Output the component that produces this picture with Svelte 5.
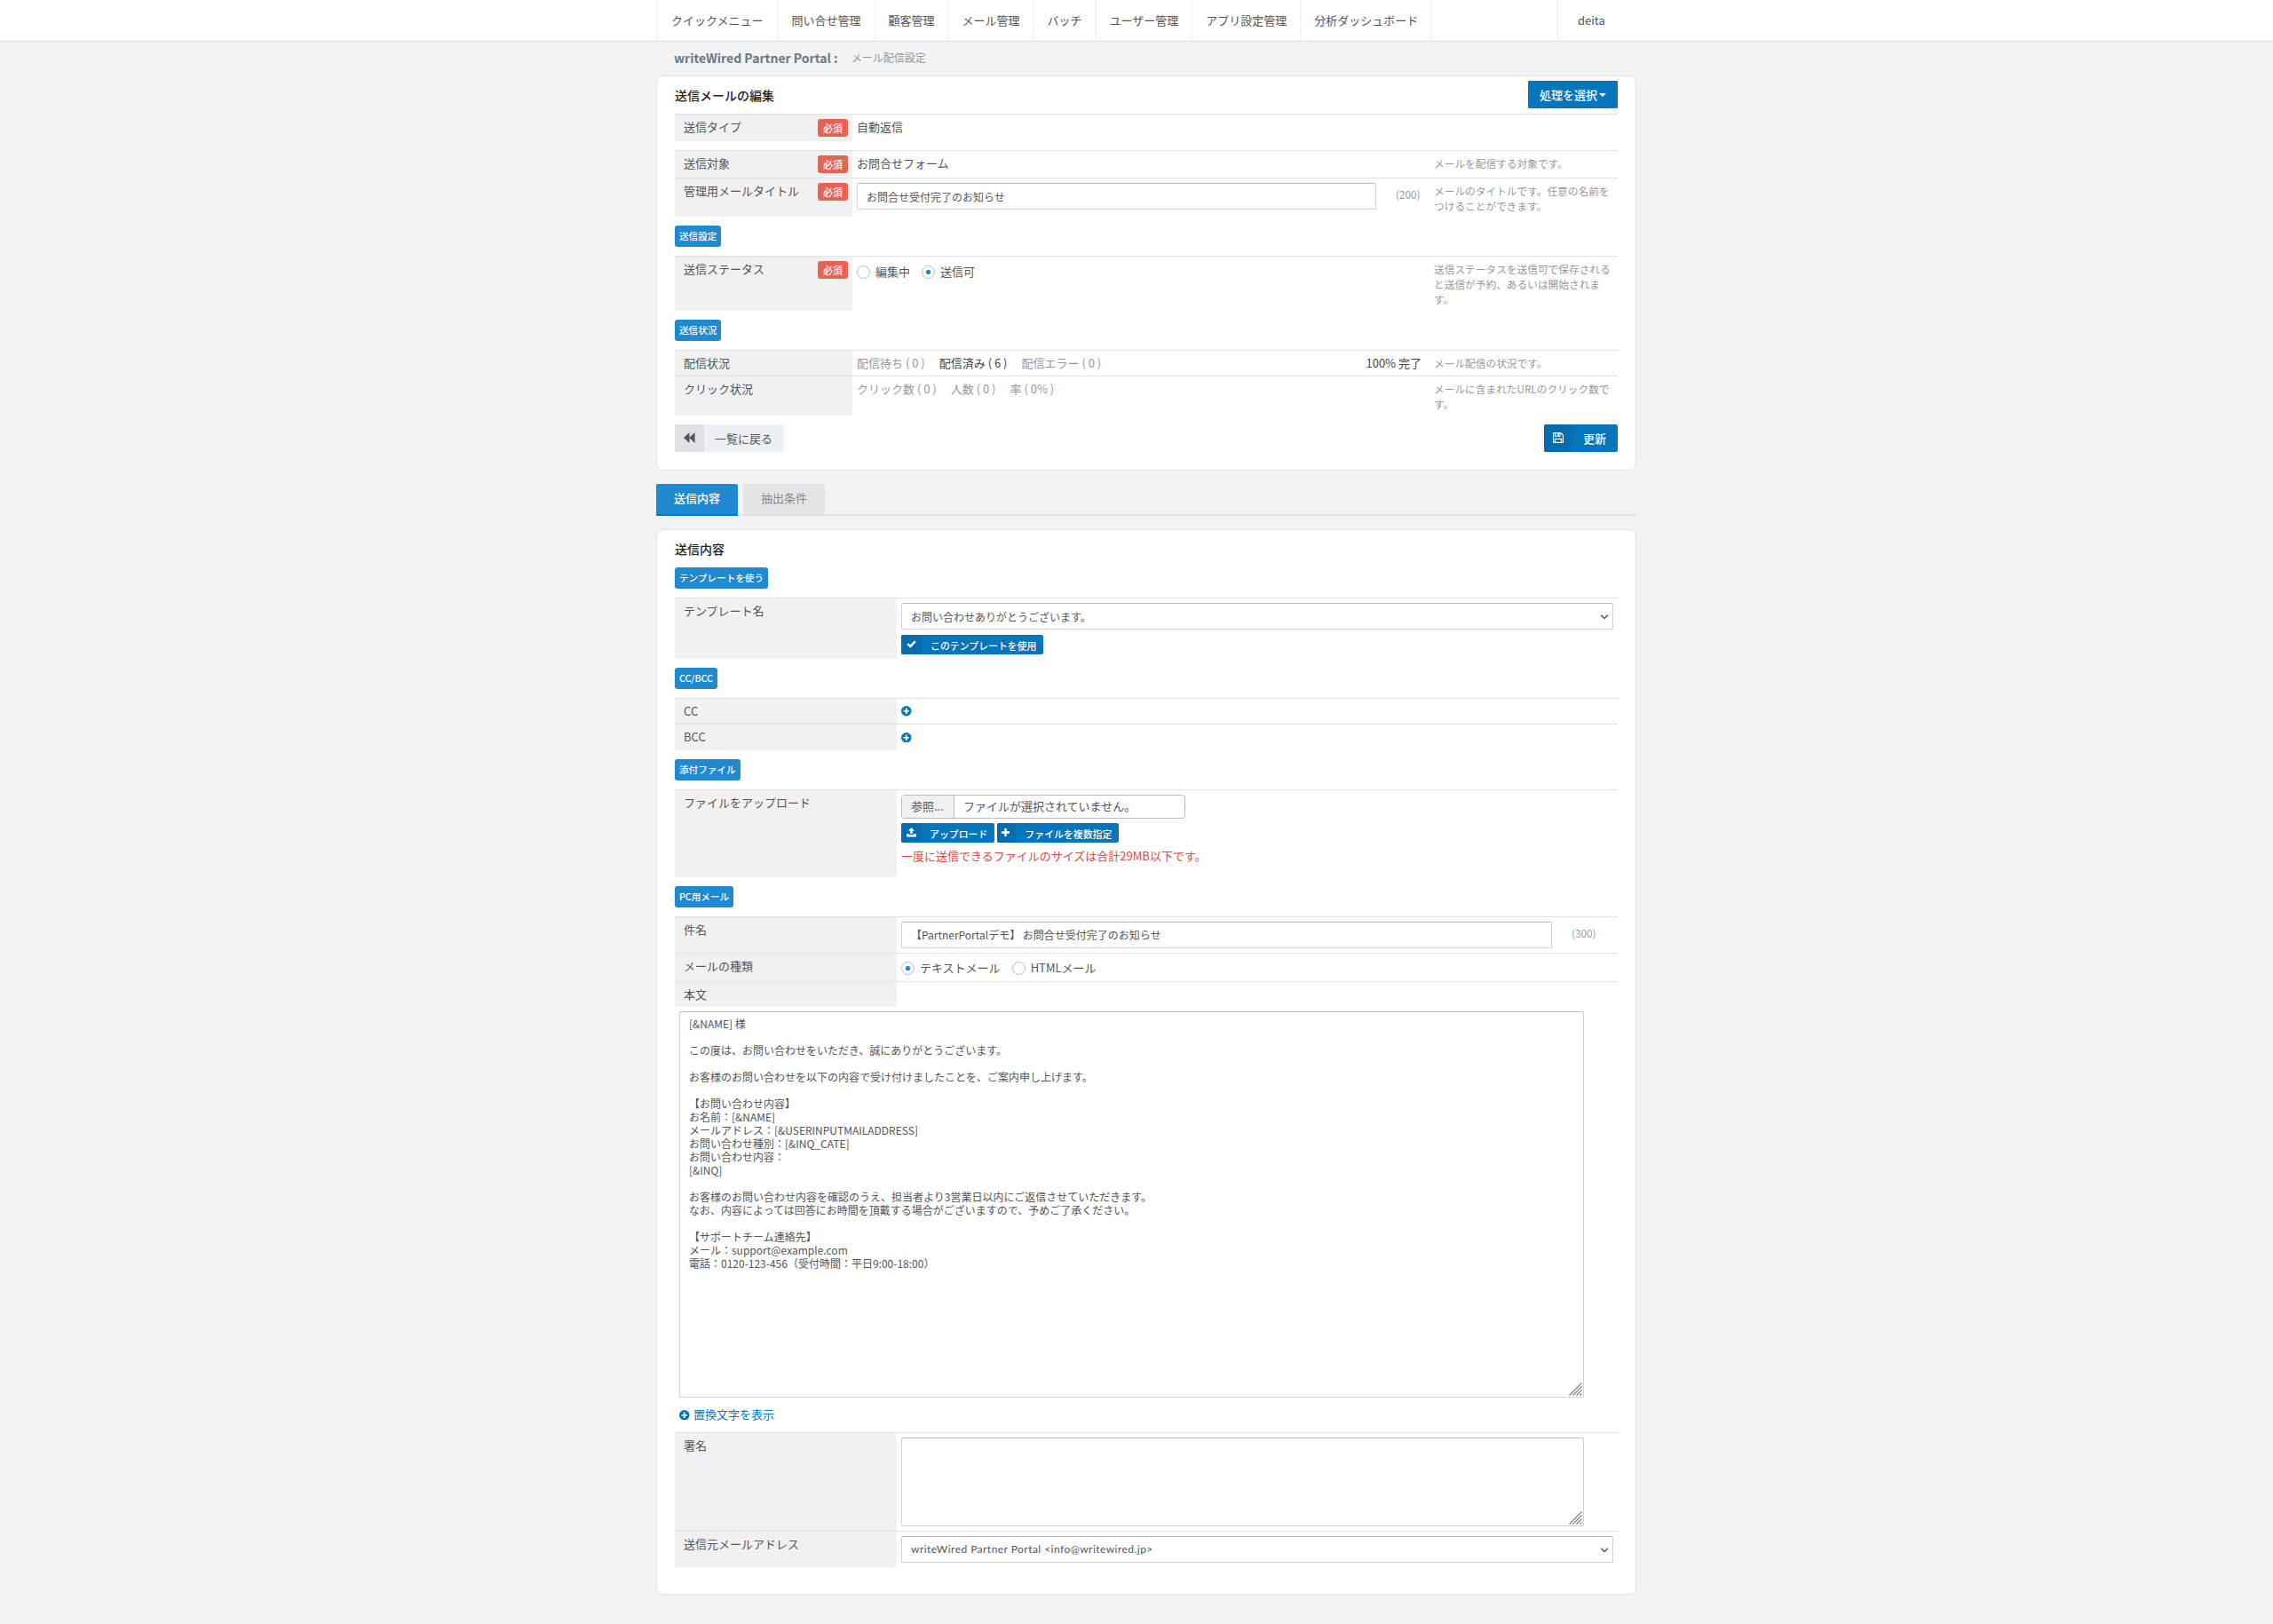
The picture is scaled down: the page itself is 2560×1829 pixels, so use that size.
<script lang="ts">
  const navItems = [
    "クイックメニュー",
    "問い合せ管理",
    "顧客管理",
    "メール管理",
    "バッチ",
    "ユーザー管理",
    "アプリ設定管理",
    "分析ダッシュボード"
  ];

  let activeTab = "content"; // "content" or "filter"
  let status = "ready"; // "editing" or "ready"
  let mailType = "text"; // "text" or "html"

  let manageTitle = "お問合せ受付完了のお知らせ";
  let subject = "【PartnerPortalデモ】 お問合せ受付完了のお知らせ";
  let signature = "";

  let body = `[&NAME] 様

この度は、お問い合わせをいただき、誠にありがとうございます。

お客様のお問い合わせを以下の内容で受け付けましたことを、ご案内申し上げます。

【お問い合わせ内容】
お名前：[&NAME]
メールアドレス：[&USERINPUTMAILADDRESS]
お問い合わせ種別：[&INQ_CATE]
お問い合わせ内容：
[&INQ]

お客様のお問い合わせ内容を確認のうえ、担当者より3営業日以内にご返信させていただきます。
なお、内容によっては回答にお時間を頂戴する場合がございますので、予めご了承ください。

【サポートチーム連絡先】
メール：support@example.com
電話：0120-123-456（受付時間：平日9:00-18:00）`;
</script>

{#snippet plusCircle()}
  <svg class="plus-circle" viewBox="0 0 12 12">
    <circle cx="6" cy="6" r="6" fill="#0676bc" />
    <path d="M6 2.6v6.8M2.6 6h6.8" stroke="#fff" stroke-width="1.8" />
  </svg>
{/snippet}

{#snippet chevron()}
  <svg class="chevron" viewBox="0 0 10 6">
    <path d="M1.2 0.8L5 4.5L8.8 0.8" fill="none" stroke="#555" stroke-width="1.6" />
  </svg>
{/snippet}

{#snippet grip()}
  <svg class="grip" viewBox="0 0 15 15">
    <path d="M0.5 14.5L14.5 0.5M4.5 14.5L14.5 4.5M8.5 14.5L14.5 8.5M12.5 14.5L14.5 12.5" stroke="#777" stroke-width="1.1" />
  </svg>
{/snippet}

<header class="navbar">
  <div class="nav-inner">
    <nav>
      {#each navItems as item}
        <a href="#top">{item}</a>
      {/each}
    </nav>
    <a class="user" href="#user">deita</a>
  </div>
</header>

<main>
  <div class="page-title">
    <h1>writeWired Partner Portal :</h1>
    <span>メール配信設定</span>
  </div>

  <section class="card">
    <div class="card-head">
      <h2>送信メールの編集</h2>
      <button class="btn-select">処理を選択<i class="caret"></i></button>
    </div>

    <div class="row">
      <div class="th">送信タイプ<span class="required">必須</span></div>
      <div class="td">自動返信</div>
    </div>
    <div class="row spaced">
      <div class="th">送信対象<span class="required">必須</span></div>
      <div class="td">お問合せフォーム</div>
      <p class="help">メールを配信する対象です。</p>
    </div>
    <div class="row title-row">
      <div class="th">管理用メールタイトル<span class="required">必須</span></div>
      <div class="td field">
        <input class="title-input" bind:value={manageTitle} />
        <span class="limit">(200)</span>
      </div>
      <p class="help">メールのタイトルです。任意の名前をつけることができます。</p>
    </div>

    <h3 class="label">送信設定</h3>
    <div class="row">
      <div class="th">送信ステータス<span class="required">必須</span></div>
      <div class="td radios">
        <label><input type="radio" value="editing" bind:group={status} />編集中</label>
        <label><input type="radio" value="ready" bind:group={status} />送信可</label>
      </div>
      <p class="help">送信ステータスを送信可で保存されると送信が予約、あるいは開始されます。</p>
    </div>

    <h3 class="label">送信状況</h3>
    <div class="row">
      <div class="th">配信状況</div>
      <div class="td stats">
        <span>配信待ち ( 0 )</span>
        <span class="on">配信済み ( 6 )</span>
        <span>配信エラー ( 0 )</span>
        <span class="done">100% 完了</span>
      </div>
      <p class="help">メール配信の状況です。</p>
    </div>
    <div class="row">
      <div class="th">クリック状況</div>
      <div class="td stats">
        <span>クリック数 ( 0 )</span>
        <span>人数 ( 0 )</span>
        <span>率 ( 0% )</span>
      </div>
      <p class="help">メールに含まれたURLのクリック数です。</p>
    </div>

    <div class="actions">
      <button class="btn back">
        <span class="icon">
          <svg width="13" height="12" viewBox="0 0 13 12"><path d="M6.5 0v12L0 6zM12.6 0v12L6.2 6z" fill="#555" /></svg>
        </span>
        <span class="text">一覧に戻る</span>
      </button>
      <button class="btn">
        <span class="icon">
          <svg width="12" height="12" viewBox="0 0 12 12" fill="none" stroke="#fff">
            <path d="M0.6 0.6H8.8L11.4 3.2V11.4H0.6Z" stroke-width="1.2" />
            <path d="M2.8 0.6V4.2H8V0.6M2.6 11.4V7.4H9.4V11.4" stroke-width="1.1" />
            <path d="M6.1 1V3.8" stroke-width="1.5" />
          </svg>
        </span>
        <span class="text">更新</span>
      </button>
    </div>
  </section>

  <div class="tabs">
    <button class:active={activeTab === "content"} on:click={() => (activeTab = "content")}>送信内容</button>
    <button class:active={activeTab === "filter"} on:click={() => (activeTab = "filter")}>抽出条件</button>
  </div>

  <section class="card content">
    <div class="card-head">
      <h2>送信内容</h2>
    </div>

    <h3 class="label first">テンプレートを使う</h3>
    <div class="row wide">
      <div class="th">テンプレート名</div>
      <div class="td">
        <div class="select">
          <select><option>お問い合わせありがとうございます。</option></select>
          {@render chevron()}
        </div>
        <div class="small-buttons">
          <button class="btn small">
            <span class="icon check">
              <svg width="11" height="9" viewBox="0 0 11 9"><path d="M1.2 4.2L4.2 7.1L9.8 1.4" fill="none" stroke="#fff" stroke-width="2.5" /></svg>
            </span>
            <span class="text">このテンプレートを使用</span>
          </button>
        </div>
      </div>
    </div>

    <h3 class="label">CC/BCC</h3>
    <div class="row wide">
      <div class="th">CC</div>
      <div class="td icon-cell">{@render plusCircle()}</div>
    </div>
    <div class="row wide">
      <div class="th">BCC</div>
      <div class="td icon-cell">{@render plusCircle()}</div>
    </div>

    <h3 class="label">添付ファイル</h3>
    <div class="row wide upload">
      <div class="th">ファイルをアップロード</div>
      <div class="td">
        <div class="file">
          <span class="browse">参照...</span>
          <span>ファイルが選択されていません。</span>
        </div>
        <div class="small-buttons">
          <button class="btn small">
            <span class="icon">
              <svg width="11" height="11" viewBox="0 0 11 11" fill="#fff">
                <path d="M5.5 0L9 3.7H6.8V7H4.2V3.7H2Z" />
                <path d="M0 7.2H3.2V8.2H7.8V7.2H11V10.4H0Z" />
              </svg>
            </span>
            <span class="text">アップロード</span>
          </button>
          <button class="btn small">
            <span class="icon plus">
              <svg width="9" height="9" viewBox="0 0 9 9"><path d="M4.5 0V9M0 4.5H9" stroke="#fff" stroke-width="2.4" /></svg>
            </span>
            <span class="text">ファイルを複数指定</span>
          </button>
        </div>
        <p class="warning">一度に送信できるファイルのサイズは合計29MB以下です。</p>
      </div>
    </div>

    <h3 class="label">PC用メール</h3>
    <div class="row wide">
      <div class="th">件名</div>
      <div class="td field">
        <input class="subject-input" bind:value={subject} />
        <span class="limit">(300)</span>
      </div>
    </div>
    <div class="row wide type">
      <div class="th">メールの種類</div>
      <div class="td radios">
        <label><input type="radio" value="text" bind:group={mailType} />テキストメール</label>
        <label><input type="radio" value="html" bind:group={mailType} />HTMLメール</label>
      </div>
    </div>
    <div class="row wide">
      <div class="th">本文</div>
      <div class="td"></div>
    </div>
    <div class="area body-area">
      <textarea spellcheck="false" bind:value={body}></textarea>
      {@render grip()}
    </div>
    <a class="replace" href="#replace">{@render plusCircle()}置換文字を表示</a>

    <div class="row wide">
      <div class="th">署名</div>
      <div class="td">
        <div class="area sign-area">
          <textarea bind:value={signature}></textarea>
          {@render grip()}
        </div>
      </div>
    </div>
    <div class="row wide">
      <div class="th">送信元メールアドレス</div>
      <div class="td">
        <div class="select latin">
          <select><option>writeWired Partner Portal &lt;info@writewired.jp&gt;</option></select>
          {@render chevron()}
        </div>
      </div>
    </div>
  </section>
</main>

<style>
  :global(body) {
    background: #f1f3f5;
    color: #555;
    font-family: "Noto Sans CJK JP", sans-serif;
    font-size: 13px;
    line-height: 18.57px;
    min-height: 100vh;
  }

  * {
    box-sizing: border-box;
  }

  h1, h2, h3, p {
    margin: 0;
  }

  a {
    text-decoration: none;
  }

  button, input, select, textarea {
    font-family: inherit;
    color: inherit;
    margin: 0;
  }

  button {
    border: none;
    padding: 0;
    cursor: pointer;
  }

  /* Navigation */
  .navbar {
    height: 47px;
    background: #fff;
    border-bottom: 1px solid #dfe0e2;
  }

  .nav-inner {
    display: flex;
    justify-content: space-between;
    width: 1103px;
    height: 46px;
    margin-left: 740px;
  }

  nav {
    display: flex;
    border-left: 1px solid #eee;
  }

  nav a, .user {
    padding: 0 15px;
    line-height: 46px;
    color: #555;
    border-right: 1px solid #eee;
  }

  nav a:first-child {
    padding-right: 16px;
  }

  .user {
    width: 89px;
    padding-left: 22px;
    border-right: none;
    border-left: 1px solid #eee;
  }

  main {
    width: 1104px;
    margin-left: 739px;
    padding-bottom: 33px;
  }

  .page-title {
    display: flex;
    align-items: center;
    gap: 15px;
    height: 38px;
    padding: 0 0 2px 20px;
  }

  .page-title h1 {
    font-size: 14px;
    font-weight: 700;
    color: #6c7883;
  }

  .page-title span {
    font-size: 12px;
    color: #999;
  }

  /* Cards */
  .card {
    background: #fff;
    border: 1px solid #e3e4e6;
    border-radius: 8px;
    padding: 0 20px 20px;
  }

  .card.content {
    margin-top: 15px;
    padding-bottom: 30px;
  }

  .card-head {
    display: flex;
    justify-content: space-between;
    align-items: flex-start;
    height: 42px;
    padding-top: 5px;
  }

  h2 {
    font-size: 14px;
    font-weight: 500;
    line-height: 32px;
    color: #222;
  }

  .btn-select {
    display: flex;
    align-items: center;
    justify-content: center;
    gap: 2px;
    width: 101px;
    height: 31px;
    background: #0676bc;
    color: #fff;
    font-size: 13px;
    font-weight: 500;
    border-radius: 1px;
  }

  .caret {
    border: 4px solid transparent;
    border-top-color: #fff;
    border-bottom: none;
  }

  /* Form rows */
  .row {
    display: grid;
    grid-template-columns: 200px 645px 1fr;
    border-top: 1px solid #e2e2e2;
  }

  .row.wide {
    grid-template-columns: 250px 1fr;
  }

  .row.spaced {
    margin-top: 10px;
  }

  .title-row {
    height: 44px;
  }

  .th {
    display: flex;
    justify-content: space-between;
    align-items: flex-start;
    padding: 5px 5px 5px 10px;
    background: #f1f1f1;
  }

  .td {
    padding: 5px;
  }

  .help {
    padding: 5px 5px 4.4px 10px;
    font-size: 11.7px;
    line-height: 17px;
    color: #999;
  }

  .required {
    width: 34px;
    height: 20px;
    border-radius: 3px;
    background: #e66454;
    color: #fff;
    font-size: 11px;
    font-weight: 500;
    line-height: 21px;
    text-align: center;
  }

  .label {
    width: fit-content;
    margin: 10px 0;
    padding: 5px;
    border-radius: 3px;
    background: #1f8ad0;
    color: #fff;
    font-size: 10.6px;
    font-weight: 500;
    line-height: 14.25px;
  }

  .content .label {
    line-height: 14px;
  }

  .label.first {
    margin-top: 0;
  }

  .field {
    display: flex;
    align-items: flex-start;
  }

  .title-input, .subject-input, select, textarea {
    border: 1px solid #d0d0d0;
    border-top-color: #bbb;
    border-radius: 2px;
    background: #fff;
    font-size: 12px;
    outline: none;
  }

  .title-input, .subject-input {
    height: 30px;
    padding: 0 10px;
  }

  .title-input {
    width: 585px;
  }

  .subject-input {
    width: 733px;
  }

  .limit {
    margin-left: 22px;
    font-size: 11.7px;
    line-height: 26px;
    color: #999;
  }

  .radios {
    display: flex;
    gap: 13px;
    height: 24px;
    padding-top: 7px;
  }

  .radios label {
    display: flex;
    align-items: center;
    gap: 6px;
    height: 20px;
  }

  .radios input {
    appearance: none;
    width: 15px;
    height: 15px;
    border: 1px solid #bbb;
    border-radius: 50%;
  }

  .radios input:checked {
    background: radial-gradient(circle, #1f8ad0 2.3px, #fff 3px);
  }

  .type {
    height: 32px;
  }

  .stats {
    display: flex;
    gap: 16px;
    color: #999;
  }

  .stats .on {
    color: #444;
  }

  .stats .done {
    margin-left: auto;
    margin-right: -1px;
    color: #444;
  }

  /* Buttons */
  .actions {
    display: flex;
    justify-content: space-between;
    margin-top: 10px;
  }

  .btn {
    display: flex;
    height: 31px;
    border-radius: 2px;
    overflow: hidden;
    background: #0676bc;
    color: #fff;
    font-size: 13px;
    font-weight: 500;
    line-height: 32px;
  }

  .btn .icon {
    display: flex;
    align-items: center;
    justify-content: center;
    width: 32px;
    height: 100%;
    background: #056dae;
  }

  .btn .text {
    padding: 0 13px 0 12px;
  }

  .btn.back {
    width: 123px;
    background: #edf1f7;
    color: #555;
    font-weight: 400;
  }

  .btn.back .icon {
    width: 33px;
    background: #dfe3e8;
  }

  .small-buttons {
    display: flex;
    gap: 3px;
    margin-top: 6px;
  }

  .btn.small {
    height: 22px;
    font-size: 10.9px;
    line-height: 24px;
  }

  .btn.small .icon {
    width: 22px;
    padding-bottom: 1px;
  }

  .btn.small .icon.check {
    width: 23px;
  }

  .btn.small .icon.plus {
    width: 21px;
    padding-right: 3px;
  }

  .btn.small .text {
    padding: 0 8px 0 10px;
  }

  /* Tabs */
  .tabs {
    display: flex;
    gap: 6px;
    height: 36px;
    margin-top: 15px;
    border-bottom: 2px solid #e1e2e4;
  }

  .tabs button {
    width: 92px;
    height: 34px;
    padding-bottom: 2px;
    border-radius: 2px 2px 0 0;
    background: #e4e5e7;
    color: #888;
    font-size: 13px;
    line-height: 32px;
  }

  .tabs .active {
    height: 36px;
    border-bottom: 2px solid #1475b8;
    background: #1f8ad0;
    color: #fff;
    font-weight: 500;
  }

  .select {
    position: relative;
    height: 30px;
  }

  select {
    appearance: none;
    width: 100%;
    height: 30px;
    padding: 1px 10px 0;
  }

  .latin select {
    font-family: Lato, sans-serif;
    letter-spacing: 0.46px;
    padding-top: 0;
    padding-bottom: 1px;
  }

  .chevron {
    position: absolute;
    right: 5px;
    top: 13px;
    width: 10px;
    height: 6px;
  }

  .plus-circle {
    width: 11.5px;
    height: 11.5px;
  }

  .icon-cell {
    display: flex;
    align-items: center;
  }

  .upload {
    height: 98.6px;
  }

  .file {
    display: flex;
    width: 320px;
    height: 27px;
    border: 1px solid #bbb;
    border-radius: 4px;
    line-height: 24px;
    overflow: hidden;
  }

  .file span {
    padding-left: 10px;
  }

  .file .browse {
    width: 59px;
    border-right: 1px solid #bbb;
    background: #f1f1f1;
  }

  .upload .small-buttons {
    margin-top: 5px;
  }

  .warning {
    margin-top: 6px;
    color: #e04a3a;
  }

  .area {
    position: relative;
  }

  textarea {
    display: block;
    width: 100%;
    height: 100%;
    padding: 5px 10px;
    line-height: 15px;
    resize: none;
  }

  .grip {
    position: absolute;
    right: 2px;
    bottom: 2px;
    width: 15px;
    height: 15px;
  }

  .body-area {
    width: 1019px;
    height: 435px;
    margin: 4.7px 0 0 5px;
  }

  .sign-area {
    width: 769px;
    height: 100px;
  }

  .replace {
    display: flex;
    align-items: center;
    gap: 4.5px;
    height: 39px;
    padding-left: 5px;
    color: #0676bc;
  }
</style>
